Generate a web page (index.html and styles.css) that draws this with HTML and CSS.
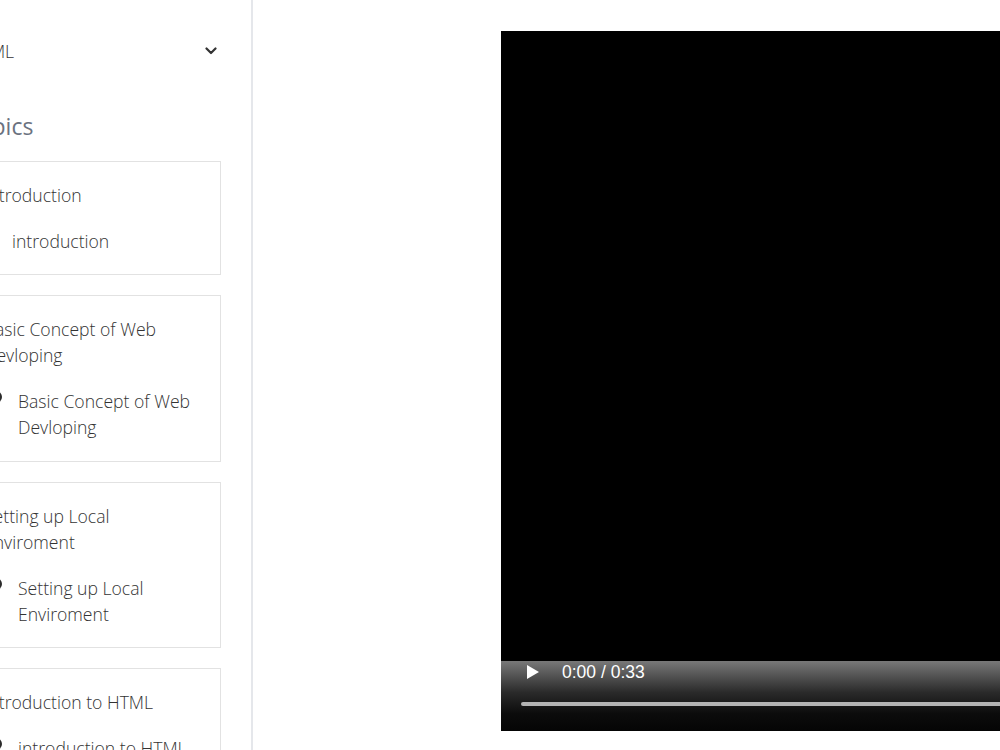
FILE: index.html
```html
<!DOCTYPE html>
<html lang="en">
<head>
<meta charset="UTF-8" />
<meta name="viewport" content="width=device-width, initial-scale=1" />
<title>HTML Course</title>
<link rel="stylesheet" href="styles.css">
</head>
<body>

<!-- Sidebar -->
<aside class="sidebar">
  <div class="sidebar-inner">
    <div class="course-select">
      <span>HTML</span>
      <svg class="chevron" width="12" height="8" viewBox="0 0 12 8">
        <path d="M1.5 1.5 L6 6 L10.5 1.5" fill="none" stroke="#333" stroke-width="2.2" stroke-linecap="round" stroke-linejoin="round"/>
      </svg>
    </div>

    <h2 class="topics-title">Topics</h2>

    <div class="topic">
      <div class="topic-title">Introduction</div>
      <div class="lesson lesson-short">
        <span class="dot"></span>
        <span>introduction</span>
      </div>
    </div>

    <div class="topic">
      <div class="topic-title">Basic Concept of Web Devloping</div>
      <div class="lesson">
        <span class="dot"></span>
        <span>Basic Concept of Web Devloping</span>
      </div>
    </div>

    <div class="topic">
      <div class="topic-title">Setting up Local Enviroment</div>
      <div class="lesson">
        <span class="dot"></span>
        <span>Setting up Local Enviroment</span>
      </div>
    </div>

    <div class="topic">
      <div class="topic-title">Introduction to HTML</div>
      <div class="lesson">
        <span class="dot"></span>
        <span>introduction to HTML</span>
      </div>
    </div>
  </div>
</aside>

<!-- Video player -->
<main class="content">
  <div class="player">
    <div class="controls">
      <div class="controls-row">
        <svg class="play" width="12" height="14" viewBox="0 0 12 14">
          <path d="M0 0 L12 7 L0 14 Z" fill="#fff"/>
        </svg>
        <span class="time">0:00 / 0:33</span>
      </div>
      <div class="progress"></div>
    </div>
  </div>
</main>

</body>
</html>
```

FILE: styles.css
```css
/* Reset and basics */
* {margin:0; padding:0; box-sizing:border-box;}
html, body {
  height: 100%;
  overflow: hidden;
}
body {
  display: flex;
  font-family: 'Open Sans', 'Liberation Sans', sans-serif;
  font-weight: 300;
  color: #333;
  background: #fff;
}

/* Sidebar */
.sidebar {
  flex: 0 0 253px;
  height: 100%;
  border-right: 2px solid #e5e7eb;
  overflow: hidden;
}
.sidebar-inner {
  margin-left: -35px;
  padding-right: 30px;
  padding-top: 38px;
}
.course-select {
  display: flex;
  align-items: center;
  justify-content: space-between;
  padding: 0 4px 0 3px;
  font-size: 17.6px;
  line-height: 26px;
}
.chevron {
  display: block;
}
.topics-title {
  margin: 46px 0 19px;
  font-size: 23px;
  line-height: 32px;
  font-weight: 500;
  color: #6b7280;
}

/* Topic cards */
.topic {
  border: 1px solid #e2e2e2;
  padding: 20px 20px 20px 18px;
  margin-bottom: 20px;
  display: flex;
  flex-direction: column;
  gap: 20px;
  font-size: 17.6px;
  line-height: 26.1px;
}
.lesson {
  display: flex;
  align-items: flex-start;
  gap: 16px;
}
.lesson .dot {
  flex: 0 0 18px;
  height: 12px;
  margin-top: 3px;
  display: flex;
  justify-content: flex-end;
}
.lesson .dot::before {
  content: '';
  width: 12px;
  height: 12px;
  border-radius: 50%;
  background: #2b2b2b;
}
.lesson-short .dot {
  flex-basis: 12px;
}

/* Video area */
.content {
  flex: 1;
  min-width: 0;
  overflow: hidden;
  padding: 31px 0 0 248px;
}
.player {
  width: 1244px;
  height: 700px;
  background: #000;
  display: flex;
  flex-direction: column;
  justify-content: flex-end;
}
.controls {
  height: 70px;
  background: linear-gradient(#787878 0%, #2a2a2a 45%, #0c0c0c 75%, #050505 100%);
  padding: 2px 0 0 20px;
}
.controls-row {
  display: flex;
  align-items: center;
  height: 18px;
  padding-left: 6px;
}
.play {
  display: block;
}
.time {
  margin-left: 23px;
  font-family: 'Liberation Sans', Arial, sans-serif;
  font-weight: 400;
  font-size: 17.5px;
  color: #fff;
}
.progress {
  margin-top: 21px;
  height: 4px;
  border-radius: 2px;
  background: #b3b3b3;
}
```
